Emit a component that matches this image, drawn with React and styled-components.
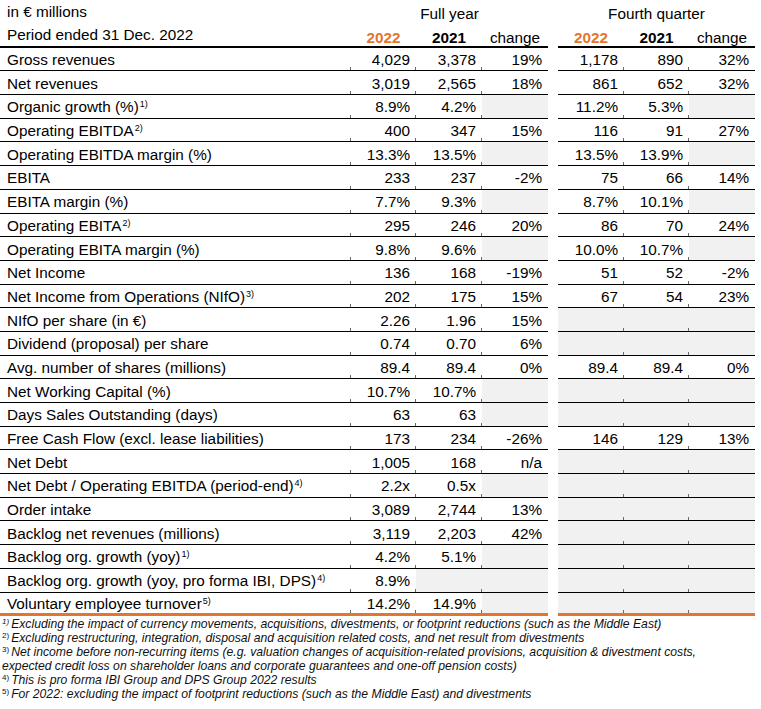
import React from "react";
import styled, { createGlobalStyle, css } from "styled-components";

const GlobalStyle = createGlobalStyle`
  html, body { margin: 0; padding: 0; background: #fff; }
  body { font-family: "Liberation Sans", Arial, sans-serif; color: #000; }
`;

const ORANGE = "#e2762e";
const GREY = "#f1f1f1";
const COLS = "351px 65px 66px 66px 10px 66px 65px 66px";

const Page = styled.div`
  width: 761px;
  display: flex;
  flex-direction: column;
  font-size: 15.3px;
`;

const Table = styled.div`
  width: 755px;
  display: flex;
  flex-direction: column;
`;

const HeadRow = styled.div`
  display: grid;
  grid-template-columns: ${COLS};
  height: ${(p) => p.$h}px;
`;

const HeadCell = styled.div`
  grid-column: ${(p) => p.$span || "auto"};
  display: flex;
  align-items: flex-end;
  justify-content: ${(p) => (p.$left ? "flex-start" : "center")};
  padding-left: ${(p) => (p.$left ? "7px" : "0")};
  padding-bottom: ${(p) => p.$pb || 0}px;
  line-height: 17px;
  white-space: nowrap;
  font-weight: ${(p) => (p.$bold ? 700 : 400)};
  color: ${(p) => (p.$orange ? ORANGE : "#000")};
  ${(p) =>
    p.$rule &&
    css`
      border-bottom: 2.4px solid #000;
    `}
`;

const Gap = styled.div``;

const Row = styled.div`
  display: grid;
  grid-template-columns: ${COLS};
  height: 23.7px;
`;

const Cell = styled.div`
  position: relative;
  box-sizing: border-box;
  display: flex;
  align-items: center;
  justify-content: ${(p) => (p.$label ? "flex-start" : "flex-end")};
  padding: ${(p) => (p.$label ? "1px 0 0 7px" : "1px 6px 0 0")};
  line-height: 17px;
  white-space: nowrap;
  background: ${(p) => (p.$grey ? GREY : "transparent")};
  border-bottom: ${(p) => (p.$last ? `3px solid ${ORANGE}` : "1px solid #000")};
  ${(p) =>
    p.$tick &&
    css`
      &::after {
        content: "";
        position: absolute;
        left: -1px;
        bottom: 0;
        width: 1px;
        height: 3px;
        background: #6a6a6a;
      }
    `}
`;

const LabelText = styled.span`
  display: inline;
`;

const Sup = styled.sup`
  font-size: 9px;
  line-height: 0;
  vertical-align: 5px;
  margin-left: 1px;
`;

const Notes = styled.div`
  display: flex;
  flex-direction: column;
  padding: 1px 0 0 2px;
  font-size: 12.2px;
  line-height: 14px;
  font-style: italic;
  color: #111;
`;

const Note = styled.div`
  white-space: nowrap;
`;

const NoteSup = styled.sup`
  font-size: 8px;
  line-height: 0;
  vertical-align: 4px;
  margin-right: 2px;
  font-style: ${(p) => (p.$italic ? "italic" : "normal")};
`;

const rows = [
  { label: "Gross revenues", fy: ["4,029", "3,378", "19%"], q: ["1,178", "890", "32%"] },
  { label: "Net revenues", fy: ["3,019", "2,565", "18%"], q: ["861", "652", "32%"] },
  { label: "Organic growth (%)", sup: "1)", fy: ["8.9%", "4.2%", null], q: ["11.2%", "5.3%", null] },
  { label: "Operating EBITDA", sup: "2)", fy: ["400", "347", "15%"], q: ["116", "91", "27%"] },
  { label: "Operating EBITDA margin (%)", fy: ["13.3%", "13.5%", null], q: ["13.5%", "13.9%", null] },
  { label: "EBITA", fy: ["233", "237", "-2%"], q: ["75", "66", "14%"] },
  { label: "EBITA margin (%)", fy: ["7.7%", "9.3%", null], q: ["8.7%", "10.1%", null] },
  { label: "Operating EBITA", sup: "2)", fy: ["295", "246", "20%"], q: ["86", "70", "24%"] },
  { label: "Operating EBITA margin (%)", fy: ["9.8%", "9.6%", null], q: ["10.0%", "10.7%", null] },
  { label: "Net Income", fy: ["136", "168", "-19%"], q: ["51", "52", "-2%"] },
  { label: "Net Income from Operations (NIfO)", sup: "3)", fy: ["202", "175", "15%"], q: ["67", "54", "23%"] },
  { label: "NIfO per share (in €)", fy: ["2.26", "1.96", "15%"], q: null },
  { label: "Dividend (proposal) per share", fy: ["0.74", "0.70", "6%"], q: null },
  { label: "Avg. number of shares (millions)", fy: ["89.4", "89.4", "0%"], q: ["89.4", "89.4", "0%"] },
  { label: "Net Working Capital (%)", fy: ["10.7%", "10.7%", null], q: null },
  { label: "Days Sales Outstanding (days)", fy: ["63", "63", null], q: null },
  { label: "Free Cash Flow (excl. lease liabilities)", fy: ["173", "234", "-26%"], q: ["146", "129", "13%"] },
  { label: "Net Debt", fy: ["1,005", "168", "n/a"], q: null },
  { label: "Net Debt / Operating EBITDA (period-end)", sup: "4)", fy: ["2.2x", "0.5x", null], q: null },
  { label: "Order intake", fy: ["3,089", "2,744", "13%"], q: null },
  { label: "Backlog net revenues (millions)", fy: ["3,119", "2,203", "42%"], q: null },
  { label: "Backlog org. growth (yoy)", sup: "1)", fy: ["4.2%", "5.1%", null], q: null },
  { label: "Backlog org. growth (yoy, pro forma IBI, DPS)", sup: "4)", fy: ["8.9%", null, null], q: null },
  { label: "Voluntary employee turnover", sup: "5)", fy: ["14.2%", "14.9%", null], q: null },
];

const notes = [
  { n: "1)", italic: true, text: "Excluding the impact of currency movements, acquisitions, divestments, or footprint reductions (such as the Middle East)" },
  { n: "2)", text: "Excluding restructuring, integration, disposal and acquisition related costs, and net result from divestments" },
  { n: "3)", text: "Net income before non-recurring items (e.g. valuation changes of acquisition-related provisions, acquisition & divestment costs," },
  { n: null, text: "expected credit loss on shareholder loans and corporate guarantees and one-off pension costs)" },
  { n: "4)", text: "This is pro forma IBI Group and DPS Group 2022 results" },
  { n: "5)", text: "For 2022: excluding the impact of footprint reductions (such as the Middle East) and divestments" },
];

function DataRow({ row, last }) {
  const q = row.q || [null, null, null];
  return (
    <Row>
      <Cell $label $last={last}>
        <LabelText>
          {row.label}
          {row.sup && <Sup>{row.sup}</Sup>}
        </LabelText>
      </Cell>
      {row.fy.map((v, i) => (
        <Cell key={"f" + i} $grey={v === null} $last={last} $tick>
          {v}
        </Cell>
      ))}
      <Gap />
      {q.map((v, i) => (
        <Cell key={"q" + i} $grey={v === null} $last={last} $tick={i > 0}>
          {v}
        </Cell>
      ))}
    </Row>
  );
}

export default function App() {
  return (
    <Page>
      <GlobalStyle />
      <Table>
        <HeadRow $h={23}>
          <HeadCell $left $pb={3.4}>in € millions</HeadCell>
          <HeadCell $span="span 3" $pb={0.7}>Full year</HeadCell>
          <Gap />
          <HeadCell $span="span 3" $pb={0.7}>Fourth quarter</HeadCell>
        </HeadRow>
        <HeadRow $h={24.7}>
          <HeadCell $left $rule $pb={3}>Period ended 31 Dec. 2022</HeadCell>
          <HeadCell $rule $bold $orange>2022</HeadCell>
          <HeadCell $rule $bold>2021</HeadCell>
          <HeadCell $rule>change</HeadCell>
          <Gap />
          <HeadCell $rule $bold $orange>2022</HeadCell>
          <HeadCell $rule $bold>2021</HeadCell>
          <HeadCell $rule>change</HeadCell>
        </HeadRow>
        {rows.map((r, i) => (
          <DataRow key={r.label} row={r} last={i === rows.length - 1} />
        ))}
      </Table>
      <Notes>
        {notes.map((n, i) => (
          <Note key={i}>
            {n.n && <NoteSup $italic={n.italic}>{n.n}</NoteSup>}
            {n.text}
          </Note>
        ))}
      </Notes>
    </Page>
  );
}
